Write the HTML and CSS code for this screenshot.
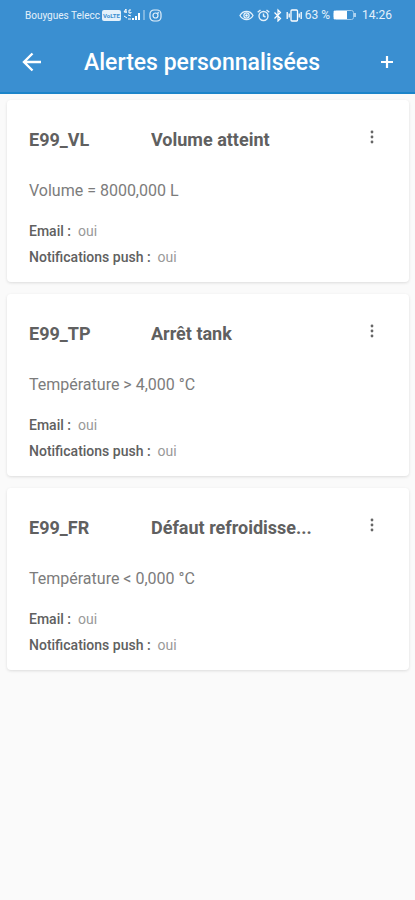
FILE: index.html
```html
<!DOCTYPE html>
<html lang="fr">
    <head>
        <meta charset="utf-8">
        <meta name="viewport" content="width=device-width, initial-scale=1">
        <title>Alertes personnalisées</title>
        <link rel="stylesheet" href="styles.css">
    </head>
    <body>
        <header class="header">
            <div class="status-bar">
                <div class="status-group">
                    <span class="carrier">Bouygues Telecc</span>
                    <span class="volte">VoLTE</span>
                    <svg class="signal" width="24" height="14" viewBox="0 0 24 14">
                        <path d="M3 1L1 4h3M3 1v4M8 2H6v3h2V4M1 8l3 2M5 7l3 1M5 11h3" fill="none" stroke="#fff" stroke-width="1"/>
                        <path d="M9 12v-2h2v2zM12 12V8h2v4zM15 12V5h2v7z" fill="#fff"/>
                        <path d="M20 2h2v10h-2z" fill="#fff" opacity=".35"/>
                    </svg>
                    <svg width="13" height="14" viewBox="0 0 13 14" fill="none" stroke="#e4f1fb" stroke-width="1.2">
                        <rect x="1" y="2" width="11" height="11" rx="4"/>
                        <circle cx="6.500" cy="7.500" r="2.500"/>
                        <circle cx="9.300" cy="4.700" r=".3"/>
                    </svg>
                </div>
                <div class="status-group status-icons">
                    <svg width="15" height="14" viewBox="0 0 15 14" fill="none" stroke="#e4f1fb">
                        <path d="M1 7.500C4 2 11 2 14 7.500 11 13 4 13 1 7.500z" stroke-width="1.300"/>
                        <circle cx="7.500" cy="7.500" r="2.600" stroke-width="1.200"/>
                        <circle cx="7.500" cy="7.500" r="1.200" fill="#fff" stroke="none"/>
                    </svg>
                    <svg width="13" height="14" viewBox="0 0 13 14" fill="none" stroke="#e4f1fb" stroke-width="1.400">
                        <circle cx="6.500" cy="8" r="4.500"/>
                        <path d="M6.500 5.500V8l2 1M.7 4.200L3.500 2M12.300 4.200L9.500 2"/>
                    </svg>
                    <svg width="10" height="14" viewBox="0 0 10 14" fill="none" stroke="#fff" stroke-width="1.200">
                        <path d="M1.500 4.500l6 6L5 13V2l2.500 2.500-6 6"/>
                    </svg>
                    <svg width="16" height="14" viewBox="0 0 16 14" fill="none" stroke="#fff" stroke-width="1.300">
                        <rect x="5" y="2" width="6.500" height="11" rx="1"/>
                        <path d="M1.200 4v7M3.200 5.500v4M13.200 5.500v4M15.200 4v7"/>
                    </svg>
                    <span>63 %</span>
                    <svg width="24" height="10" viewBox="0 0 24 10">
                        <rect x=".5" y=".5" width="20" height="9" rx="2" fill="none" stroke="#9fcbed"/>
                        <path d="M1 1h13v8H1z" fill="#fff"/>
                        <path d="M22 3v4" stroke="#d5e9f8" stroke-width="1.500"/>
                    </svg>
                    <span class="clock">14:26</span>
                </div>
            </div>
            <div class="toolbar">
                <button class="icon-button" type="button" aria-label="Retour">
                    <svg width="20" height="20" viewBox="0 0 20 20" fill="none" stroke="#fff" stroke-width="2.400">
                        <path d="M19 10H2.500M10.500 1.500L2 10l8.500 8.500"/>
                    </svg>
                </button>
                <h1>Alertes personnalisées</h1>
                <button class="icon-button" type="button" aria-label="Ajouter une alerte">
                    <svg width="14" height="14" viewBox="0 0 14 14" stroke="#fff" stroke-width="2.200">
                        <path d="M7 1v12M1 7h12"/>
                    </svg>
                </button>
            </div>
        </header>

        <main class="alerts">
            <article class="card">
                <div class="card-header">
                    <h2>E99_VL</h2>
                    <h2 class="alert-name">Volume atteint</h2>
                    <button class="menu-button" type="button" aria-label="Options">
                        <svg width="4" height="14" viewBox="0 0 4 14" fill="#666">
                            <circle cx="2" cy="2" r="1.400"/><circle cx="2" cy="7" r="1.400"/><circle cx="2" cy="12" r="1.400"/>
                        </svg>
                    </button>
                </div>
                <p class="condition">Volume = 8000,000 L</p>
                <dl class="channels">
                    <div><dt>Email :</dt><dd>oui</dd></div>
                    <div><dt>Notifications push :</dt><dd>oui</dd></div>
                </dl>
            </article>

            <article class="card">
                <div class="card-header">
                    <h2>E99_TP</h2>
                    <h2 class="alert-name">Arrêt tank</h2>
                    <button class="menu-button" type="button" aria-label="Options">
                        <svg width="4" height="14" viewBox="0 0 4 14" fill="#666">
                            <circle cx="2" cy="2" r="1.400"/><circle cx="2" cy="7" r="1.400"/><circle cx="2" cy="12" r="1.400"/>
                        </svg>
                    </button>
                </div>
                <p class="condition">Température &gt; 4,000 °C</p>
                <dl class="channels">
                    <div><dt>Email :</dt><dd>oui</dd></div>
                    <div><dt>Notifications push :</dt><dd>oui</dd></div>
                </dl>
            </article>

            <article class="card">
                <div class="card-header">
                    <h2>E99_FR</h2>
                    <h2 class="alert-name">Défaut refroidisse...</h2>
                    <button class="menu-button" type="button" aria-label="Options">
                        <svg width="4" height="14" viewBox="0 0 4 14" fill="#666">
                            <circle cx="2" cy="2" r="1.400"/><circle cx="2" cy="7" r="1.400"/><circle cx="2" cy="12" r="1.400"/>
                        </svg>
                    </button>
                </div>
                <p class="condition">Température &lt; 0,000 °C</p>
                <dl class="channels">
                    <div><dt>Email :</dt><dd>oui</dd></div>
                    <div><dt>Notifications push :</dt><dd>oui</dd></div>
                </dl>
            </article>
        </main>
    </body>
</html>
```
FILE: styles.css
```css
* {
    box-sizing: border-box;
}

body {
    margin: 0;
    min-height: 100vh;
    background: #fafafa;
    color: #606060;
    font-family: Roboto, "Liberation Sans", sans-serif;
}

h1, h2, p, dl, dd {
    margin: 0;
}

svg {
    display: block;
    flex: none;
}

button {
    display: flex;
    align-items: center;
    justify-content: center;
    padding: 0;
    border: 0;
    background: none;
    cursor: pointer;
}

.header {
    background: #3a8fd1;
    color: #fff;
    border-bottom: 2px solid #1b84c9;
}

.status-bar {
    display: flex;
    justify-content: space-between;
    align-items: center;
    height: 30px;
    padding: 0 23px 0 25px;
}

.status-group {
    display: flex;
    align-items: center;
    gap: 2px;
    color: #e4f1fb;
    white-space: nowrap;
}

.status-icons {
    gap: 3px;
    font-size: 12px;
}

.carrier {
    font-size: 10px;
}

.volte {
    padding: 0 1px;
    border-radius: 2px;
    background: #e4f1fb;
    color: #3a8fd1;
    font-size: 6px;
    font-weight: 700;
    line-height: 11px;
}

.clock {
    margin-left: 2px;
}

.toolbar {
    display: flex;
    align-items: center;
    height: 62px;
    padding: 2px 8px 0 12px;
}

.toolbar h1 {
    flex: 1;
    padding: 2px 0 0 32px;
    font-size: 23px;
    font-weight: 500;
    line-height: 30px;
}

.icon-button {
    width: 40px;
    height: 40px;
}

.alerts {
    display: flex;
    flex-direction: column;
    gap: 12px;
    padding: 6px 6px 24px 7px;
}

.card {
    padding: 25px 21px 12px 22px;
    border-radius: 4px;
    background: #fff;
    box-shadow: 0 1px 3px rgba(0, 0, 0, 0.12);
}

.card-header {
    display: grid;
    grid-template-columns: 122px 1fr 32px;
}

.card h2 {
    font-size: 18px;
    font-weight: 700;
    line-height: 30px;
}

.alert-name {
    overflow: hidden;
    text-overflow: ellipsis;
    white-space: nowrap;
}

.menu-button {
    height: 24px;
}

.condition {
    margin-top: 24px;
    color: #7c7c7c;
    font-size: 16px;
    line-height: 24px;
}

.channels {
    margin-top: 15px;
    font-size: 14px;
    line-height: 26px;
}

.channels div {
    display: flex;
    gap: 7px;
}

.channels dt {
    font-weight: 500;
}

.channels dd {
    color: #999;
}
```
